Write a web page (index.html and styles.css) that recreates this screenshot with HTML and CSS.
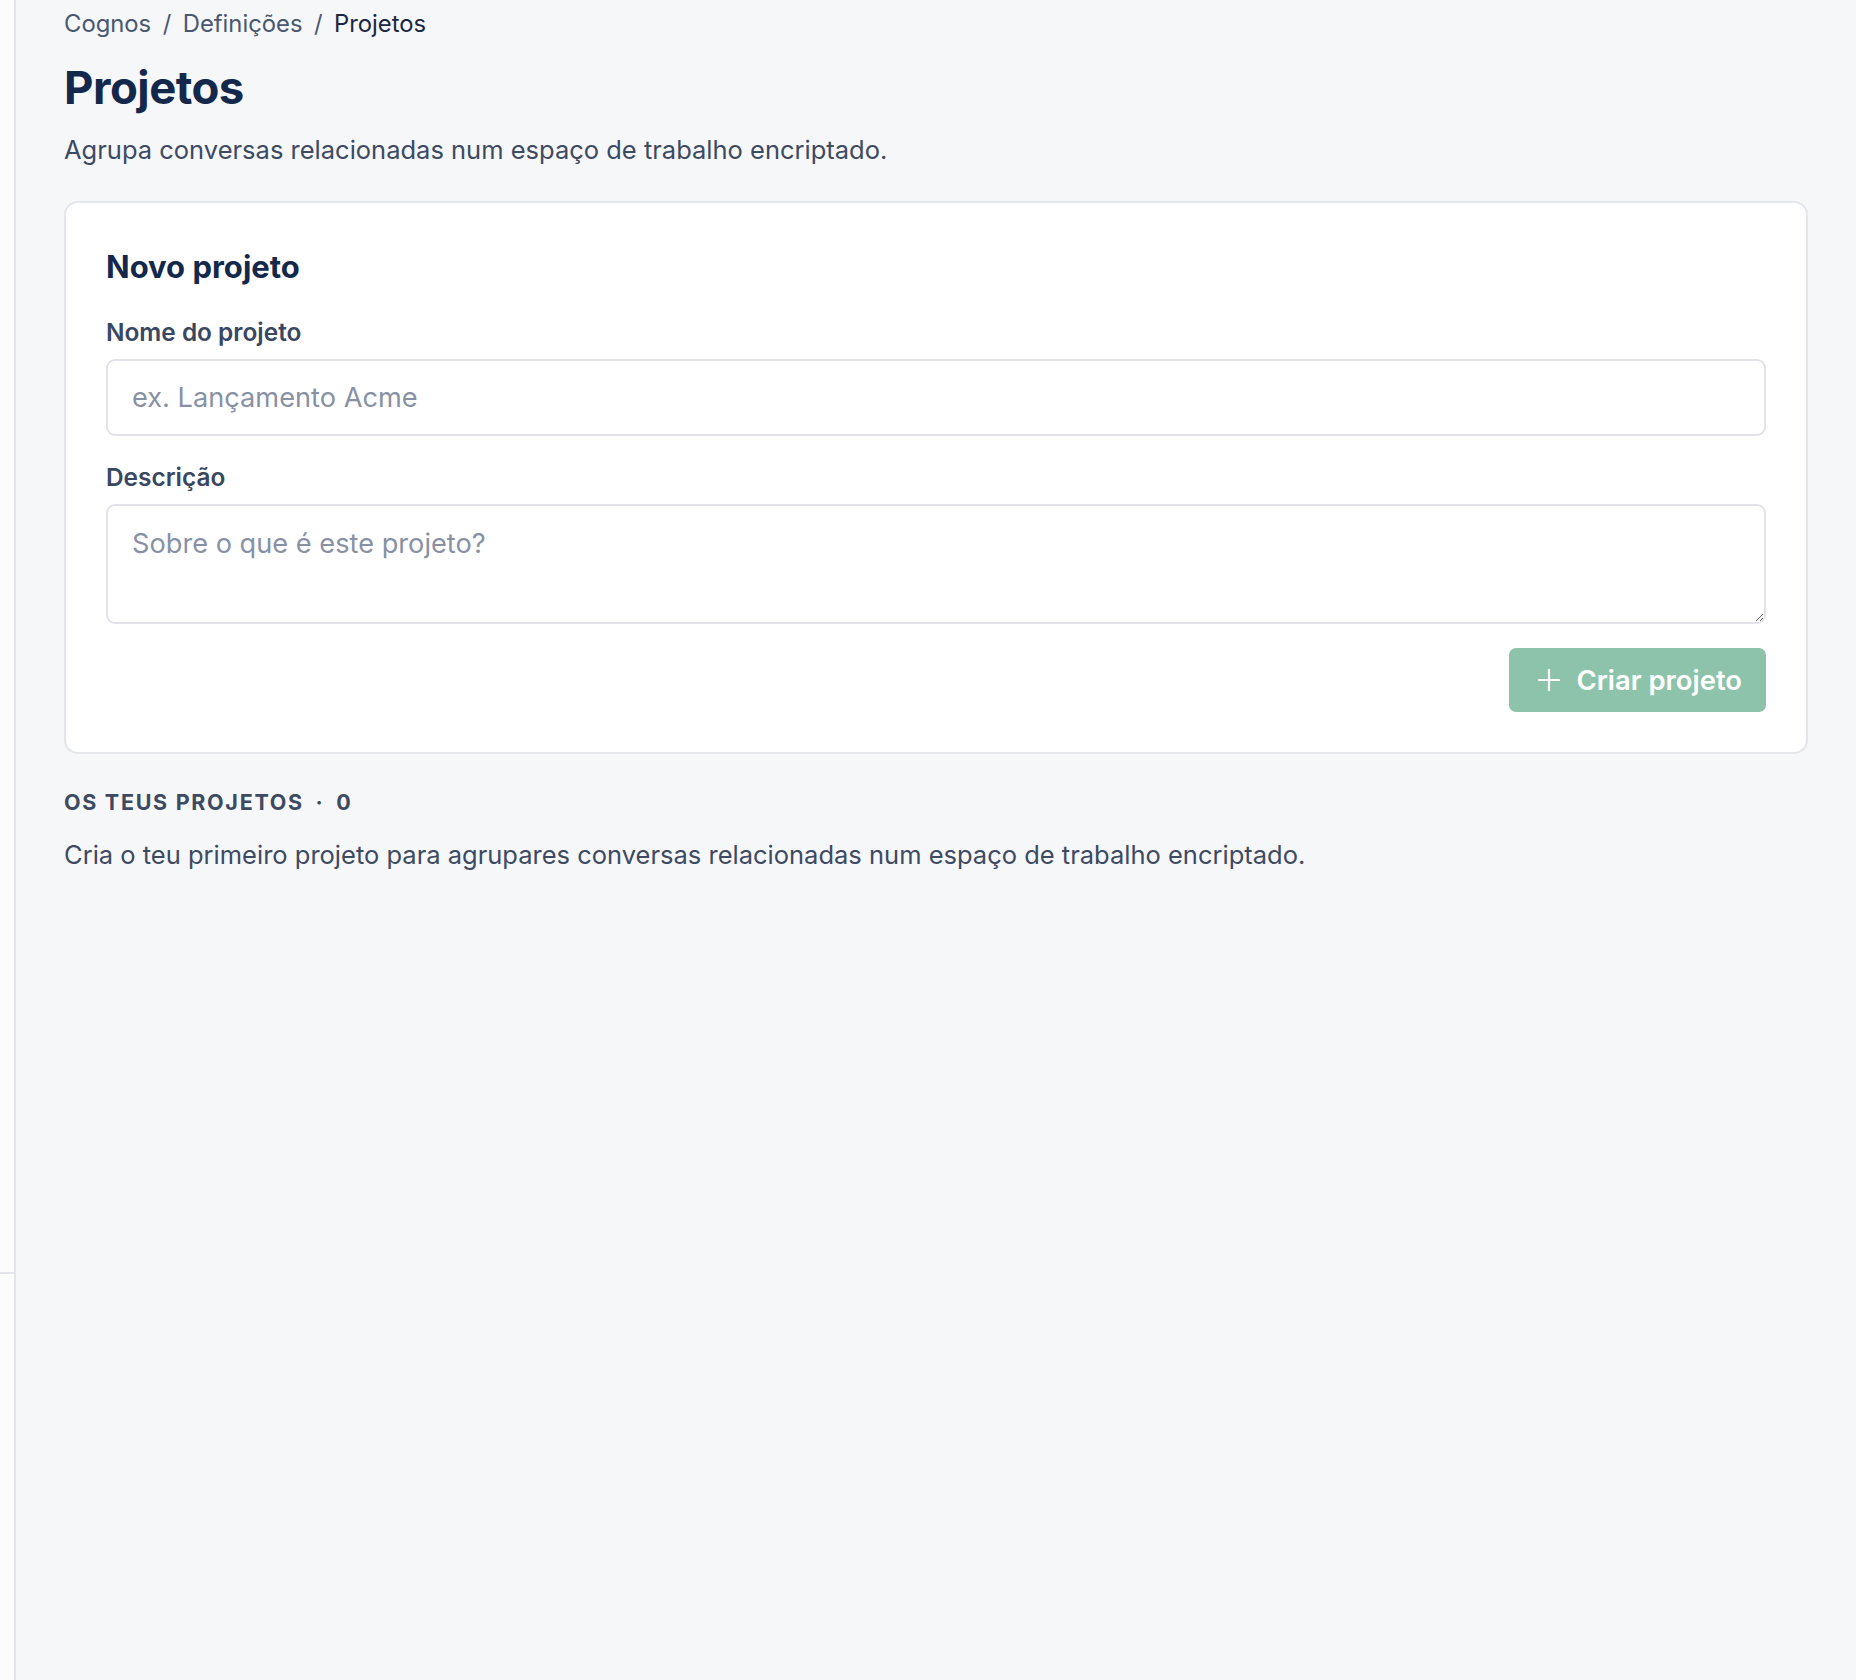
FILE: index.html
```html
<!DOCTYPE html>
<html lang="pt">
<head>
    <meta charset="UTF-8">
    <meta name="viewport" content="width=device-width, initial-scale=1.0">
    <title>Projetos · Cognos</title>
    <link rel="stylesheet" href="styles.css">
</head>
<body>
    <div class="layout">
        <aside class="sidebar">
            <div class="sidebar-top"></div>
            <div class="sidebar-footer"></div>
        </aside>

        <main class="main">
            <nav class="crumbs">
                <a href="#">Cognos</a>
                <span class="sep">/</span>
                <a href="#">Definições</a>
                <span class="sep">/</span>
                <span class="current">Projetos</span>
            </nav>

            <h1 class="page-title">Projetos</h1>
            <p class="lead">Agrupa conversas relacionadas num espaço de trabalho encriptado.</p>

            <section class="card">
                <h2 class="card-title">Novo projeto</h2>

                <label class="field-label" for="projName">Nome do projeto</label>
                <input class="field" id="projName" type="text" placeholder="ex. Lançamento Acme">

                <label class="field-label field-label--gap" for="projDesc">Descrição</label>
                <textarea class="field field--area" id="projDesc" placeholder="Sobre o que é este projeto?"></textarea>

                <div class="actions">
                    <button class="btn-primary" type="button" disabled>
                        <svg width="22" height="22" viewBox="0 0 22 22" fill="none" stroke="currentColor" stroke-width="2.2" stroke-linecap="round">
                            <path d="M1 11h20M11 1v20"/>
                        </svg>
                        Criar projeto
                    </button>
                </div>
            </section>

            <h3 class="section-title">Os teus projetos <span class="dot">·</span> 0</h3>
            <p class="empty">Cria o teu primeiro projeto para agrupares conversas relacionadas num espaço de trabalho encriptado.</p>
        </main>
    </div>
</body>
</html>
```

FILE: styles.css
```css
*{
    box-sizing: border-box;
}

body{
    margin: 0;
    background-color: #f6f7f9;
    font-family: Inter, "Noto Sans", "Liberation Sans", sans-serif;
    color: #3d4a61;
}

.layout{
    display: flex;
    min-height: 100vh;
}

.sidebar{
    width: 16px;
    flex-shrink: 0;
    display: flex;
    flex-direction: column;
    background-color: #fcfcfd;
    border-right: 2px solid #e4e5ea;
}

.sidebar-top{
    flex: 1;
}

.sidebar-footer{
    height: 408px;
    border-top: 2px solid #e4e5ea;
}

.main{
    flex: 1;
    padding: 6px 48px 48px;
}

.crumbs{
    display: flex;
    gap: 11.5px;
    font-size: 23.8px;
    line-height: 36px;
    color: #4a5770;
}

.crumbs a{
    color: inherit;
    text-decoration: none;
}

.crumbs .current{
    color: #1b2742;
}

.page-title{
    margin: 18px 0 0;
    font-size: 45.5px;
    line-height: 55px;
    font-weight: 700;
    color: #14284b;
    letter-spacing: -0.5px;
}

.lead{
    margin: 15px 0 0;
    font-size: 25.5px;
    line-height: 40px;
}

.card{
    margin-top: 31px;
    padding: 40px;
    background-color: #fff;
    border: 2px solid #e4e6eb;
    border-radius: 14px;
}

.card-title{
    margin: 0;
    font-size: 31px;
    line-height: 48px;
    font-weight: 700;
    color: #14284b;
}

.field-label{
    display: block;
    margin-top: 23px;
    font-size: 24.4px;
    line-height: 36px;
    font-weight: 600;
    color: #3a4760;
}

.field-label--gap{
    margin-top: 23px;
}

.field{
    display: block;
    width: 100%;
    margin-top: 9px;
    height: 77px;
    padding: 16px 24px;
    font-family: inherit;
    font-size: 27.2px;
    line-height: 40px;
    color: #1b2742;
    background-color: #fff;
    border: 2px solid #e1e3e8;
    border-radius: 9px;
    outline: none;
}

.field::placeholder{
    color: #8891a4;
}

.field--area{
    height: 120px;
    margin-top: 9px;
    padding-top: 18px;
    resize: vertical;
}

.actions{
    display: flex;
    justify-content: flex-end;
    margin-top: 24px;
}

.btn-primary{
    display: flex;
    align-items: center;
    gap: 17px;
    height: 64px;
    padding: 0 24px 0 29px;
    font-family: inherit;
    font-size: 27.4px;
    font-weight: 600;
    color: #fff;
    background-color: #8ec3ab;
    border: none;
    border-radius: 7px;
}

.section-title{
    margin: 32px 0 0;
    font-size: 21.5px;
    line-height: 32px;
    font-weight: 700;
    text-transform: uppercase;
    letter-spacing: 1.7px;
    color: #3d4a61;
}

.section-title .dot{
    margin: 0 5px;
}

.empty{
    margin: 17px 0 0;
    font-size: 25.5px;
    line-height: 40px;
}
```
